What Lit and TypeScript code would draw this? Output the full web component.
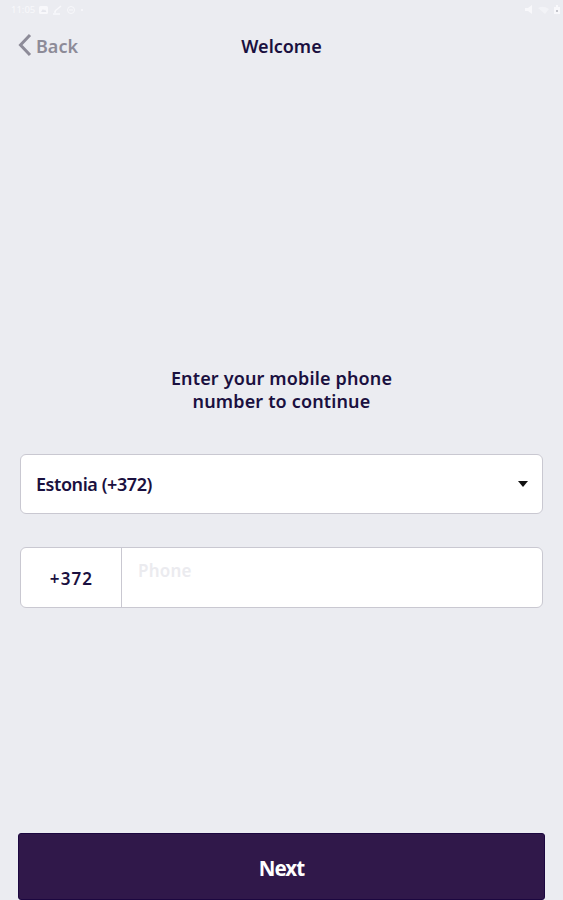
import { LitElement, html, css } from "lit";
import { customElement } from "lit/decorators.js";

@customElement("app-root")
export class AppRoot extends LitElement {
  static styles = css`
    :host { display: flex; flex-direction: column; width: 563px; height: 900px; box-sizing: border-box; overflow: hidden; background: #ebecf1; color: #1a1040; font-family: "Noto Sans", "Open Sans", sans-serif; font-weight: 600; }
    * { box-sizing: border-box; }
    .status { display: flex; justify-content: space-between; height: 18px; padding: 3px 3px 0 11px; font-size: 9.5px; line-height: 13px; color: #f8f8fb; font-weight: 400; }
    .group { display: flex; gap: 4px; align-items: center; height: 13px; }
    .header { display: grid; grid-template-columns: 1fr auto 1fr; align-items: center; height: 55px; padding: 0 18px; }
    .back { display: flex; align-items: center; gap: 4px; color: #8d8b98; font-size: 18px; }
    .back svg { margin-top: -1px; }
    .title { font-size: 18px; }
    .prompt { margin-top: 294px; text-align: center; font-size: 18px; line-height: 23px; letter-spacing: 0.15px; }
    .field { display: flex; align-items: center; margin: 41px 20px 0; height: 60px; border: 1px solid #c9c8d1; border-radius: 6px; background: #fff; }
    .select { justify-content: space-between; padding: 0 14px 0 15px; font-size: 18px; letter-spacing: -0.43px; }
    .phone { margin-top: 33px; height: 61px; align-items: stretch; }
    .code { display: flex; align-items: center; justify-content: center; width: 101px; padding: 2px 0 0 1px; border-right: 1px solid #c9c8d1; font-size: 17px; letter-spacing: 1.1px; }
    .hint { padding: 11px 16px; color: #ebebef; font-size: 17px; line-height: 24px; letter-spacing: 0.2px; }
    .next { display: flex; align-items: center; justify-content: center; margin: auto 18px 0; padding-top: 2px; height: 67px; border: 1px solid #1c0740; border-radius: 3px; background: #30184a; color: #fff; font-size: 20.5px; font-weight: 700; letter-spacing: -0.9px; }
  `;
  render() {
    return html`
      <div class="status">
        <div class="group">
          <span>11:05</span>
          <svg width="9" height="9" viewBox="0 0 9 9" fill="currentColor"><rect y="1" width="9" height="8" rx="1.5"/><path d="M2 7 4 4 5 5.5 6 4.5 7.5 7Z" fill="#e5e6ed"/></svg>
          <svg width="10" height="10" viewBox="0 0 10 10" fill="none" stroke="currentColor" stroke-width="1.5"><path d="M9 1 3 6M1 9H8M2 7H4"/></svg>
          <svg width="10" height="10" viewBox="0 0 10 10" fill="none" stroke="currentColor"><circle cx="5" cy="5" r="3.5"/><path d="M3 5H7"/></svg>
          <svg width="4" height="4"><circle cx="2" cy="2" r="1" fill="currentColor"/></svg>
        </div>
        <div class="group">
          <svg width="9" height="9" viewBox="0 0 9 9" fill="currentColor"><path d="M0 3H3L7 0V9L3 6H0Z"/></svg>
          <svg width="11" height="8" viewBox="0 0 11 8" fill="currentColor" opacity="0.6"><path d="M0 2Q5-1 11 3L7 8Z"/></svg>
          <svg width="7" height="9" viewBox="0 0 7 9"><path d="M1 2H3V0H5V2H7V9H1Z" fill="currentColor"/><rect x="3" y="5" width="2" height="2" fill="#c4c5cc"/></svg>
        </div>
      </div>
      <div class="header">
        <div class="back"><svg width="14" height="24" viewBox="0 0 14 24" fill="none" stroke="currentColor" stroke-width="3"><path d="M12 2 2.5 12 12 22"/></svg><span>Back</span></div>
        <div class="title">Welcome</div>
      </div>
      <div class="prompt">Enter your mobile phone<br />number to continue</div>
      <div class="field select"><span>Estonia (+372)</span><svg width="10" height="6"><path d="M0 0H10L5 6Z" fill="#111"/></svg></div>
      <div class="field phone"><div class="code">+372</div><div class="hint">Phone</div></div>
      <div class="next">Next</div>
    `;
  }
}
